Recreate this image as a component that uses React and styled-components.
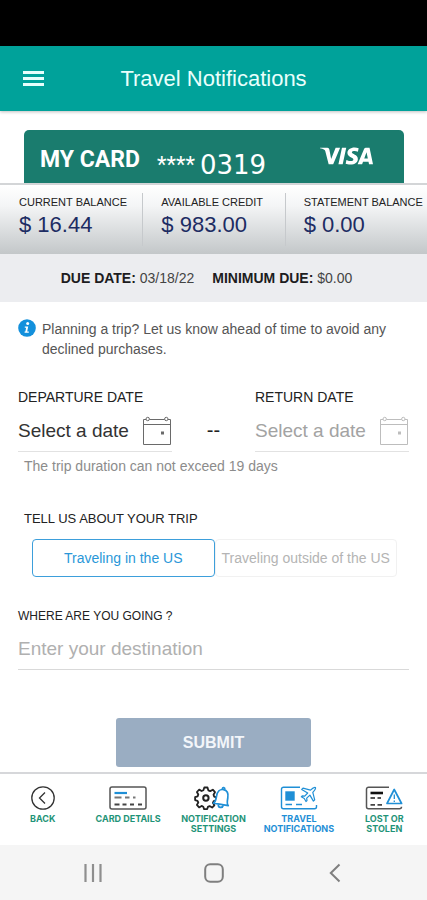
import React, { useState } from 'react'
import styled, { createGlobalStyle } from 'styled-components'
import { SiVisa } from 'react-icons/si'

const GlobalStyle = createGlobalStyle`
  * {
    box-sizing: border-box;
  }
  body {
    margin: 0;
    background-color: #fff;
    font-family: "Liberation Sans", Arial, sans-serif;
    color: #333;
  }
  button, input {
    font-family: inherit;
    margin: 0;
    padding: 0;
    border: none;
    background: none;
  }
  button {
    cursor: pointer;
  }
`

const Screen = styled.div`
  min-height: 100vh;
  display: flex;
  flex-direction: column;
`

const StatusBar = styled.div`
  height: 46px;
  background-color: #000;
`

const Header = styled.header`
  height: 65px;
  padding: 0 22px;
  display: grid;
  grid-template-columns: 24px 1fr 24px;
  align-items: center;
  background-color: #00a29a;
  box-shadow: 0 1px 3px rgba(0, 0, 0, 0.25);
`

const MenuButton = styled.button`
  display: flex;
  color: #e6fffc;
`

const Title = styled.h1`
  margin: 0;
  font-size: 22px;
  line-height: 28px;
  font-weight: 400;
  text-align: center;
  color: #e9fffc;
`

const CardArea = styled.div`
  padding: 19px 23px 0 24px;
`

const CardTab = styled.div`
  height: 53px;
  padding: 0 31px 0 16px;
  display: flex;
  align-items: center;
  border-radius: 5px 5px 0 0;
  background-color: #1a7c6e;
  color: #fff;
`

const CardName = styled.span`
  padding-top: 6px;
  font-family: Roboto, sans-serif;
  font-size: 23px;
  line-height: 28px;
  font-weight: 700;
`

const CardMask = styled.span`
  padding: 16px 0 0 17px;
  font-family: Roboto, sans-serif;
  font-size: 22px;
  line-height: 22px;
  font-weight: 400;
`

const CardDigits = styled.span`
  padding: 16px 0 0 5px;
  font-family: "DejaVu Sans", sans-serif;
  font-size: 26px;
  line-height: 28px;
`

const Brand = styled.span`
  margin-left: auto;
  padding-bottom: 2px;
  display: flex;

  svg {
    width: 53px;
    height: 18px;
  }
`

const Balances = styled.dl`
  margin: 0;
  height: 71px;
  padding: 8px 0;
  display: grid;
  grid-template-columns: repeat(3, 1fr);
  border-top: 2px solid #d3d5d7;
  background: linear-gradient(#fff 0%, #f4f5f6 30%, #c3c7c9 100%);
`

const Balance = styled.div`
  padding-left: 18px;
  border-left: 1px solid ${({ $first }) => ($first ? 'transparent' : '#c6c9cc')};
  white-space: nowrap;
`

const BalanceLabel = styled.dt`
  padding-top: 1px;
  font-size: 11px;
  line-height: 16px;
  color: #222;
`

const BalanceValue = styled.dd`
  margin: 0;
  padding-top: 2px;
  font-size: 22px;
  line-height: 26px;
  color: #1d2c63;
`

const DueBar = styled.div`
  height: 48px;
  padding-right: 14px;
  display: flex;
  align-items: center;
  justify-content: center;
  gap: 18px;
  background-color: #ecedf0;
  font-size: 14px;
  line-height: 20px;
  color: #444;

  b {
    color: #1c1c20;
  }
`

const Form = styled.form`
  flex: 1;
  padding: 17px 18px 5px;
  display: flex;
  flex-direction: column;
`

const Notice = styled.p`
  margin: 0 0 30px;
  display: flex;
  gap: 6px;
  font-size: 14px;
  line-height: 20px;
  color: #555;

  svg {
    flex: none;
  }
`

const Dates = styled.div`
  display: grid;
  grid-template-columns: 154px 1fr 154px;
`

const DateDash = styled.span`
  padding-top: 31px;
  text-align: center;
  font-size: 20px;
  line-height: 20px;
  color: #222;
`

const Label = styled.label`
  display: block;
  font-size: ${({ $size }) => $size || 14}px;
  line-height: 16px;
  color: #222;
`

const DateRow = styled.div`
  height: 47px;
  padding-top: 6px;
  display: flex;
  align-items: center;
  border-bottom: 1px solid #e2e2e2;
  color: ${({ $muted }) => ($muted ? '#a3a3a3' : '#333')};
`

const DateInput = styled.input`
  flex: 1;
  min-width: 0;
  font-size: 19px;
  line-height: 24px;
  color: inherit;
  outline: none;

  &::placeholder {
    color: inherit;
    opacity: 1;
  }
`

const CalendarButton = styled.button`
  display: flex;
  color: ${({ $muted }) => ($muted ? '#bdbdbd' : '#6a6a6a')};
`

const Hint = styled.p`
  margin: 6px 6px 37px;
  font-size: 14px;
  line-height: 16px;
  color: #8c8c8c;
`

const TripType = styled.div`
  padding: 0 12px 31px 6px;
`

const Segments = styled.div`
  margin: 12px 0 0 8px;
  display: grid;
  grid-template-columns: 1fr 1fr;
`

const Segment = styled.button`
  height: 38px;
  border: 1px solid ${({ $active }) => ($active ? '#3d9fdb' : '#f1f1f1')};
  border-radius: 4px;
  font-size: 14px;
  line-height: 18px;
  white-space: nowrap;
  color: ${({ $active }) => ($active ? '#2a97d8' : '#b4b4b4')};
`

const Destination = styled.input`
  width: 100%;
  height: 46px;
  padding-top: 5px;
  border-bottom: 1px solid #d9d9d9;
  font-size: 19px;
  color: #333;
  outline: none;

  &::placeholder {
    color: #b0b0b0;
    opacity: 1;
  }
`

const Submit = styled.button`
  width: 50%;
  height: 49px;
  margin: 48px auto 0;
  border-radius: 3px;
  background-color: #9aadc2;
  font-size: 16px;
  font-weight: 700;
  color: #f3f6fa;
`

const TabBar = styled.nav`
  height: 73px;
  display: grid;
  grid-template-columns: repeat(5, 1fr);
  border-top: 2px solid #d6d7da;
`

const Tab = styled.a`
  padding-top: 12px;
  display: flex;
  flex-direction: column;
  align-items: center;
  gap: 4px;
  font-family: Inter, sans-serif;
  font-size: 9px;
  line-height: 10px;
  font-weight: 700;
  text-align: center;
  text-decoration: none;
  color: ${({ $active }) => ($active ? '#1f8fd6' : '#1f9478')};
`

const TabLine = styled.span`
  display: block;
`

const SystemBar = styled.div`
  height: 55px;
  padding: 0 32px;
  display: grid;
  grid-template-columns: repeat(3, 1fr);
  background-color: #f5f5f5;
`

const SystemButton = styled.button`
  display: flex;
  align-items: center;
  justify-content: center;
`

const MenuIcon = () => (
  <svg width="23" height="16" viewBox="0 0 23 16" fill="currentColor">
    <path d="M1 0h21v3H1zM1 6h21v3H1zM1 12h21v3H1z" />
  </svg>
)

const InfoIcon = () => (
  <svg width="18" height="18" viewBox="0 0 18 18">
    <circle cx="9" cy="9" r="8.8" fill="#1390dc" />
    <circle cx="9.7" cy="4.6" r="1.5" fill="#fff" />
    <path d="M6.8 7.4h3.4l-1 5h1.6v1.4H6.6v-1.4h.8l.7-3.6H6.8z" fill="#fff" />
  </svg>
)

const CalendarIcon = () => (
  <svg width="30" height="30" viewBox="0 0 30 30" fill="none" stroke="currentColor">
    <path d="M4 3.5H1.500v25h27v-25H26M7.500 3.5h15M1.500 8.500h27" />
    <circle cx="5.700" cy="3" r="1.700" />
    <circle cx="24.300" cy="3" r="1.700" />
    <rect x="19" y="15.500" width="3" height="3" fill="currentColor" stroke="none" />
  </svg>
)

const BackIcon = () => (
  <svg width="24" height="24" viewBox="0 0 24 24" fill="none" stroke="#333" strokeWidth="1.300">
    <circle cx="12" cy="12" r="11.200" />
    <path d="M14 6.500 8.500 12l5.500 5.500" />
  </svg>
)

const CardIcon = () => (
  <svg width="38" height="24" viewBox="0 0 38 24" fill="none">
    <rect x="1" y="1" width="36" height="22" rx="2" stroke="#555" strokeWidth="1.500" />
    <path d="M5.500 7H18" stroke="#1f8fd6" strokeWidth="2.200" />
    <path d="M5.500 11.500h7M16 11.500h4.500M24 11.500h2.500" stroke="#777" strokeWidth="1.800" />
    <path d="M5.500 18.500h5M13.500 18.500h4M21 18.500h4M29 18.500h4" stroke="#444" strokeWidth="2" />
  </svg>
)

const SettingsIcon = () => (
  <svg width="38" height="24" viewBox="0 0 38 24" fill="none">
    <path
      d="M10.300 1.500h3.200l.8 2.800 1.900.8 2.600-1.400 2.200 2.500-1.500 2.500.7 1.900 2 .7v3l-2.500.8-.8 1.700 1.500 2.500-2.300 2.300-2.500-1.500-1.700.8-.7 2.200h-3.100l-.8-2.400-1.700-.8-2.500 1.500-2.200-2.500 1.400-2.400-.8-1.700-2.400-.7v-3l2.500-.7.7-1.900-1.400-2.500 2.300-2.400 2.400 1.400 1.800-.8z"
      stroke="#222"
      strokeWidth="1.800"
      strokeLinejoin="round"
    />
    <circle cx="11.900" cy="12" r="2.700" stroke="#222" strokeWidth="2" />
    <g transform="rotate(10 28 12)" stroke="#1f8fd6" strokeWidth="1.700">
      <path d="M20.500 18.500c2-1.500 1.800-4.500 1.800-7.500 0-4.500 2-7.500 5.700-7.500s5.700 3 5.700 7.500c0 3-.2 6 1.800 7.500z" fill="#fff" strokeLinejoin="round" />
      <path d="M26.700 3.200c0-2.200 2.600-2.200 2.600 0M25.500 19c.3 3.400 4.800 3.400 5.100 0" />
    </g>
  </svg>
)

const TravelIcon = () => (
  <svg width="38" height="24" viewBox="0 0 38 24" fill="none" stroke="#1f8fd6" strokeWidth="1.400">
    <path d="M20 1.200H3.500a2 2 0 0 0-2 2v17.600a2 2 0 0 0 2 2h31a2 2 0 0 0 2-2V19" />
    <rect x="6" y="6" width="8" height="8" fill="#1f8fd6" />
    <path d="M5.500 18.500h6.500M16 18.500h6" />
    <path
      d="m35.500 1.500c-1.600-.6-3 .6-5 2.600l-7.500-2-1.300 1.300 6 3.600-3 3.200-2.500-.4-.9 1 3 1.700 1.700 3 1-.9-.3-2.500 3.200-3 3.500 6 1.300-1.300-1.900-7.500c2-2 3.300-3.300 2.700-4.800z"
      strokeWidth="1.200"
      strokeLinejoin="round"
    />
  </svg>
)

const LostIcon = () => (
  <svg width="38" height="24" viewBox="0 0 38 24" fill="none">
    <path d="M24 1.200H3.500a2 2 0 0 0-2 2v17.600a2 2 0 0 0 2 2h31a2 2 0 0 0 2-2" stroke="#555" strokeWidth="1.500" />
    <path d="M5.500 7H18" stroke="#111" strokeWidth="2.600" />
    <path d="M5.500 12h4.500M12.500 12h3.500" stroke="#555" strokeWidth="2" />
    <path d="M5.500 18.800h4.500M12.500 18.800h4.500" stroke="#444" strokeWidth="1.800" />
    <path d="M29.200 3.500 22 17.500h14.600z" fill="#fff" stroke="#1f8fd6" strokeWidth="1.700" strokeLinejoin="round" />
    <path d="M29.300 8.500v4.500M29.300 14.500v1.500" stroke="#1f8fd6" strokeWidth="1.300" />
  </svg>
)

const RecentsIcon = () => (
  <svg width="20" height="20" viewBox="0 0 20 20" stroke="#8f8f8f" strokeWidth="2.200">
    <path d="M2.500 1v18M10 1v18M17.500 1v18" />
  </svg>
)

const HomeIcon = () => (
  <svg width="20" height="20" viewBox="0 0 20 20" fill="none" stroke="#7f7f7f" strokeWidth="2">
    <rect x="1.200" y="1.200" width="17.600" height="17.600" rx="5" />
  </svg>
)

const PrevIcon = () => (
  <svg width="12" height="20" viewBox="0 0 12 20" fill="none" stroke="#7f7f7f" strokeWidth="2">
    <path d="M10.500 1.500 1.800 10l8.700 8.500" />
  </svg>
)

const balances = [
  { label: 'CURRENT BALANCE', value: '$ 16.44' },
  { label: 'AVAILABLE CREDIT', value: '$ 983.00' },
  { label: 'STATEMENT BALANCE', value: '$ 0.00' },
]

const tripTypes = ['Traveling in the US', 'Traveling outside of the US']

const tabs = [
  { lines: ['BACK'], icon: <BackIcon /> },
  { lines: ['CARD DETAILS'], icon: <CardIcon /> },
  { lines: ['NOTIFICATION', 'SETTINGS'], icon: <SettingsIcon /> },
  { lines: ['TRAVEL', 'NOTIFICATIONS'], icon: <TravelIcon />, active: true },
  { lines: ['LOST OR', 'STOLEN'], icon: <LostIcon /> },
]

const DateField = ({ id, label, muted }) => (
  <div>
    <Label htmlFor={id}>{label}</Label>
    <DateRow $muted={muted}>
      <DateInput id={id} placeholder="Select a date" />
      <CalendarButton type="button" aria-label="Open calendar" $muted={muted}>
        <CalendarIcon />
      </CalendarButton>
    </DateRow>
  </div>
)

export const App = () => {
  const [trip, setTrip] = useState(tripTypes[0])

  return (
    <Screen>
      <GlobalStyle />
      <StatusBar />
      <Header>
        <MenuButton aria-label="Menu">
          <MenuIcon />
        </MenuButton>
        <Title>Travel Notifications</Title>
      </Header>
      <CardArea>
        <CardTab>
          <CardName>MY CARD</CardName>
          <CardMask>****</CardMask>
          <CardDigits>0319</CardDigits>
          <Brand>
            <SiVisa preserveAspectRatio="xMidYMid slice" aria-label="Visa" />
          </Brand>
        </CardTab>
      </CardArea>
      <Balances>
        {balances.map((item, i) => (
          <Balance key={item.label} $first={i === 0}>
            <BalanceLabel>{item.label}</BalanceLabel>
            <BalanceValue>{item.value}</BalanceValue>
          </Balance>
        ))}
      </Balances>
      <DueBar>
        <span><b>DUE DATE:</b> 03/18/22</span>
        <span><b>MINIMUM DUE:</b> $0.00</span>
      </DueBar>
      <Form onSubmit={(e) => e.preventDefault()}>
        <Notice>
          <InfoIcon />
          <span>Planning a trip? Let us know ahead of time to avoid any declined purchases.</span>
        </Notice>
        <Dates>
          <DateField id="departure" label="DEPARTURE DATE" />
          <DateDash>--</DateDash>
          <DateField id="return" label="RETURN DATE" muted />
        </Dates>
        <Hint>The trip duration can not exceed 19 days</Hint>
        <TripType role="group" aria-labelledby="trip-label">
          <Label as="div" id="trip-label" $size={13}>TELL US ABOUT YOUR TRIP</Label>
          <Segments>
            {tripTypes.map((type) => (
              <Segment
                key={type}
                type="button"
                aria-pressed={trip === type}
                $active={trip === type}
                onClick={() => setTrip(type)}
              >
                {type}
              </Segment>
            ))}
          </Segments>
        </TripType>
        <Label htmlFor="destination" $size={12}>WHERE ARE YOU GOING ?</Label>
        <Destination id="destination" placeholder="Enter your destination" />
        <Submit type="submit">SUBMIT</Submit>
      </Form>
      <TabBar>
        {tabs.map((tab) => (
          <Tab key={tab.lines[0]} href="#" $active={tab.active}>
            {tab.icon}
            <span>
              {tab.lines.map((line) => <TabLine key={line}>{line}</TabLine>)}
            </span>
          </Tab>
        ))}
      </TabBar>
      <SystemBar>
        <SystemButton aria-label="Recent apps"><RecentsIcon /></SystemButton>
        <SystemButton aria-label="Home"><HomeIcon /></SystemButton>
        <SystemButton aria-label="Previous"><PrevIcon /></SystemButton>
      </SystemBar>
    </Screen>
  )
}

export default App
